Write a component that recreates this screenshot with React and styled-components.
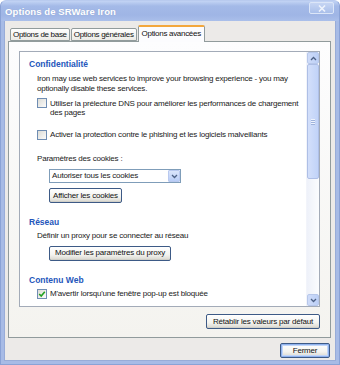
import React from 'react'
import styled, { createGlobalStyle } from 'styled-components'

const GlobalStyle = createGlobalStyle`
  body {
    margin: 0;
    font-family: Tahoma, "Liberation Sans", "DejaVu Sans", sans-serif;
  }
`

const Window = styled.div`
  width: 340px;
  height: 365px;
  box-sizing: border-box;
  display: flex;
  flex-direction: column;
  background: #a7bbe6;
  border-radius: 6px 6px 0 0;
  border: 1px solid #8aa2d6;
  border-top-color: #b9cbef;
  overflow: hidden;
`

const TitleBar = styled.div`
  height: 20px;
  flex-shrink: 0;
  display: flex;
  align-items: center;
  justify-content: space-between;
  padding: 0 5px 0 4px;
  background: linear-gradient(180deg, #c3d4f4 0%, #a4bae8 25%, #9fb5e5 70%, #aabfea 100%);
`

const Title = styled.span`
  color: #fff;
  font-weight: bold;
  font-size: 9.5px;
  letter-spacing: 0.1px;
  text-shadow: 0 0 1px #8ba0cc;
`

const CloseButton = styled.div`
  width: 25px;
  height: 12px;
  margin-top: -6px;
  box-sizing: border-box;
  border: 1px solid #dce6f8;
  border-radius: 2px;
  background: linear-gradient(180deg, #c6d5f3, #a9bfea);
  display: flex;
  align-items: center;
  justify-content: center;
`

const Client = styled.div`
  flex: 1;
  margin: 0 3px 3px 3px;
  background: #eceae8;
  border: 1px solid #98acd8;
  border-top: none;
  display: flex;
  flex-direction: column;
  padding: 4px 4px 0 3px;
  font-size: 8px;
  letter-spacing: -0.2px;
`

const TabRow = styled.div`
  display: flex;
  align-items: flex-end;
  padding-left: 2px;
  height: 16px;
  flex-shrink: 0;
  position: relative;
  z-index: 1;
`

const Tab = styled.div`
  box-sizing: border-box;
  height: ${p => (p.$active ? 17 : 13)}px;
  padding: 0 ${p => (p.$active ? 3 : 2)}px;
  margin-right: ${p => (p.$active ? 0 : 1)}px;
  margin-bottom: ${p => (p.$active ? -1 : 0)}px;
  letter-spacing: -0.3px;
  color: #111;
  display: flex;
  align-items: center;
  white-space: nowrap;
  border: 1px solid #919b9c;
  border-bottom: ${p => (p.$active ? 'none' : '1px solid #919b9c')};
  border-top: ${p => (p.$active ? '2px solid #f3a73c' : '1px solid #919b9c')};
  border-radius: 2px 2px 0 0;
  background: ${p => (p.$active ? '#fcfcfe' : 'linear-gradient(180deg, #fff, #ecebe6)')};
  padding-bottom: ${p => (p.$active ? 2 : 0)}px;
`

const Panel = styled.div`
  width: 323px;
  height: 297px;
  flex-shrink: 0;
  box-sizing: border-box;
  border: 1px solid #919b9c;
  background: linear-gradient(180deg, #fdfdfe, #f4f3ef);
  padding: 9px 10px 0 10px;
  display: flex;
  flex-direction: column;
`

const ScrollBox = styled.div`
  height: 256px;
  flex-shrink: 0;
  box-sizing: border-box;
  border: 1px solid #a3abb8;
  background: #fff;
  display: flex;
  overflow: hidden;
`

const Content = styled.div`
  flex: 1;
  padding: 7px 0 0 9px;
  color: #1a1a1a;
  line-height: 9.5px;
  white-space: nowrap;
  overflow: hidden;
`

const Heading = styled.div`
  color: #2456bb;
  font-weight: bold;
  font-size: 8.5px;
  letter-spacing: 0;
  line-height: 10px;
  margin-top: ${p => p.$mt || 0}px;
`

const Body = styled.div`
  padding-left: 8px;
  margin-top: ${p => p.$mt || 0}px;
`

const CheckRow = styled.div`
  display: flex;
  align-items: flex-start;
  gap: 3px;
  padding-left: 8px;
  margin-top: ${p => p.$mt || 0}px;
`

const Box = styled.div`
  width: 10px;
  height: 10px;
  flex-shrink: 0;
  box-sizing: border-box;
  border: 1px solid #6f8db3;
  background: linear-gradient(135deg, #dcdcd6, #fbfbfb);
  display: flex;
  align-items: center;
  justify-content: center;
`

const Label = styled.div`
  margin-top: 0.5px;
`

const Select = styled.div`
  margin: ${p => p.$mt || 0}px 0 0 20px;
  width: 132px;
  height: 14px;
  box-sizing: border-box;
  border: 1px solid #7f9db9;
  background: #fff;
  display: flex;
  align-items: center;
  justify-content: space-between;
  padding-left: 2px;
`

const DropButton = styled.div`
  width: 12px;
  height: 12px;
  box-sizing: border-box;
  border: 1px solid #b9c9ef;
  border-radius: 1px;
  background: linear-gradient(180deg, #dbe5fb, #b9cdf7);
  display: flex;
  align-items: center;
  justify-content: center;
`

const Button = styled.div`
  box-sizing: border-box;
  height: 15px;
  flex-shrink: 0;
  margin: ${p => p.$mt || 0}px 0 0 ${p => p.$ml || 0}px;
  width: ${p => p.$w}px;
  align-self: ${p => p.$self || 'flex-start'};
  border: 1px solid #3d5a86;
  border-radius: 2px;
  background: linear-gradient(180deg, #ffffff 0%, #f3f3ef 60%, #d8d6ce 100%);
  box-shadow: ${p => (p.$default ? 'inset 0 0 0 1px #8fb2ee, inset 0 0 0 2px #c2d6f8' : 'inset 0 -1px 0 #d0cfc8')};
  color: #111;
  display: flex;
  align-items: center;
  justify-content: center;
  white-space: nowrap;
`

const ScrollBar = styled.div`
  width: 12px;
  flex-shrink: 0;
  display: flex;
  flex-direction: column;
  background: linear-gradient(90deg, #eef1f9, #fbfcfe);
  border-left: 1px solid #f2f4fa;
`

const Arrow = styled.div`
  height: 12px;
  flex-shrink: 0;
  box-sizing: border-box;
  border: 1px solid #b7c7ea;
  border-radius: 2px;
  background: linear-gradient(90deg, #cfdcf9, #bccff6);
  display: flex;
  align-items: center;
  justify-content: center;
`

const Thumb = styled.div`
  height: 115px;
  flex-shrink: 0;
  box-sizing: border-box;
  border: 1px solid #aebfe6;
  border-radius: 2px;
  background: linear-gradient(90deg, #d3dffa, #c1d3f8);
  display: flex;
  align-items: center;
  justify-content: center;
`

const Grip = styled.div`
  width: 4px;
  height: 6px;
  background: repeating-linear-gradient(180deg, #eef3fd 0 1px, #9fb3dc 1px 2px);
`

const Track = styled.div`
  flex: 1;
`

const Footer = styled.div`
  display: flex;
  justify-content: flex-end;
  padding: 5px 1px 0 0;
`

const Chevron = ({ up }) => (
  <svg width="7" height="5" viewBox="0 0 7 5">
    <path d={up ? 'M1 4 L3.5 1.5 L6 4' : 'M1 1 L3.5 3.5 L6 1'} fill="none" stroke="#4d6185" strokeWidth="1.3" />
  </svg>
)

const Check = () => (
  <svg width="8" height="8" viewBox="0 0 8 8">
    <path d="M1.2 4 L3.2 6 L6.8 1.8" fill="none" stroke="#21a121" strokeWidth="1.6" />
  </svg>
)

const CloseX = () => (
  <svg width="8" height="7" viewBox="0 0 8 7">
    <path d="M1 0.5 L7 6.5 M7 0.5 L1 6.5" stroke="#eef3fc" strokeWidth="1.6" />
  </svg>
)

export default function App() {
  return (
    <>
      <GlobalStyle />
      <Window>
        <TitleBar>
          <Title>Options de SRWare Iron</Title>
          <CloseButton><CloseX /></CloseButton>
        </TitleBar>
        <Client>
          <TabRow>
            <Tab>Options de base</Tab>
            <Tab>Options générales</Tab>
            <Tab $active>Options avancées</Tab>
          </TabRow>
          <Panel>
            <ScrollBox>
              <Content>
                <Heading>Confidentialité</Heading>
                <Body $mt={5}>
                  Iron may use web services to improve your browsing experience - you may<br />
                  optionally disable these services.
                </Body>
                <CheckRow $mt={5}>
                  <Box />
                  <Label>Utiliser la prélecture DNS pour améliorer les performances de chargement<br />des pages</Label>
                </CheckRow>
                <CheckRow $mt={12}>
                  <Box />
                  <Label>Activer la protection contre le phishing et les logiciels malveillants</Label>
                </CheckRow>
                <Body $mt={14}>Paramètres des cookies :</Body>
                <Select $mt={6}>
                  <span>Autoriser tous les cookies</span>
                  <DropButton><Chevron /></DropButton>
                </Select>
                <Button $mt={5} $ml={20} $w={73}>Afficher les cookies</Button>
                <Heading $mt={14}>Réseau</Heading>
                <Body $mt={4}>Définir un proxy pour se connecter au réseau</Body>
                <Button $mt={5} $ml={20} $w={122}>Modifier les paramètres du proxy</Button>
                <Heading $mt={14}>Contenu Web</Heading>
                <CheckRow $mt={4}>
                  <Box><Check /></Box>
                  <Label>M'avertir lorsqu'une fenêtre pop-up est bloquée</Label>
                </CheckRow>
              </Content>
              <ScrollBar>
                <Arrow><Chevron up /></Arrow>
                <Thumb><Grip /></Thumb>
                <Track />
                <Arrow><Chevron /></Arrow>
              </ScrollBar>
            </ScrollBox>
            <Button $mt={7} $self="flex-end" $w={114}>Rétablir les valeurs par défaut</Button>
          </Panel>
          <Footer>
            <Button $default $w={50}>Fermer</Button>
          </Footer>
        </Client>
      </Window>
    </>
  )
}
